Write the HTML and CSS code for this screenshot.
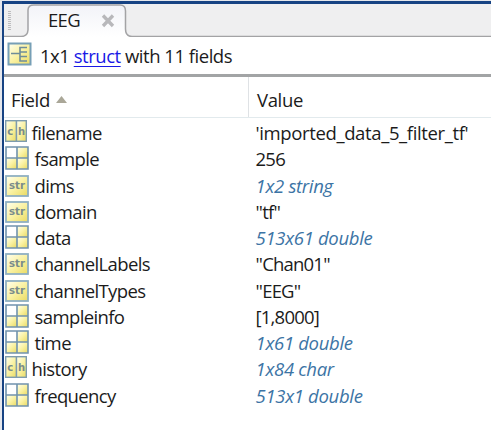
FILE: index.html
```html
<!DOCTYPE html>
<html lang="en">
<head>
<meta charset="utf-8">
<title>EEG</title>
<link rel="stylesheet" href="styles.css">
</head>
<body>
<svg width="0" height="0" class="defs">
  <defs>
    <linearGradient id="cell" x1="0" y1="0" x2="1" y2="1"><stop offset="0" stop-color="#fffff0"/><stop offset=".5" stop-color="#faf2a4"/><stop offset="1" stop-color="#e9da62"/></linearGradient>
    <symbol id="num" viewBox="0 0 24 24">
      <rect x="1" y="1" width="11" height="11" fill="#fff"/>
      <rect x="12" y="1" width="11" height="11" fill="url(#cell)"/>
      <rect x="1" y="12" width="11" height="11" fill="url(#cell)"/>
      <rect x="12" y="12" width="11" height="11" fill="url(#cell)"/>
      <path d="M1 1H23V23H1ZM12 1V23M1 12H23" fill="none" stroke="#7193ad" stroke-width="1.6"/>
    </symbol>
    <symbol id="ch" viewBox="0 0 22 22">
      <rect x=".7" y=".7" width="10.800" height="20.600" fill="url(#cell)" stroke="#7e9cae" stroke-width="1.400"/>
      <rect x="11.500" y=".7" width="9.800" height="20.600" fill="url(#cell)" stroke="#7e9cae" stroke-width="1.400"/>
      <text x="2.300" y="14.500" class="glyph">c</text><text x="13" y="14.500" class="glyph">h</text>
    </symbol>
    <symbol id="str" viewBox="0 0 24 22">
      <rect x="1" y="1" width="22" height="20" fill="url(#cell)" stroke="#8fb0c2" stroke-width="1.800"/>
      <text x="4" y="14.300" class="glyph" textLength="16" lengthAdjust="spacingAndGlyphs">str</text>
    </symbol>
  </defs>
</svg>
<div class="window">
  <div class="tabs">
    <svg class="tabshape" width="487" height="33" viewBox="0 0 487 33">
      <defs><linearGradient id="tab" x2="0" y2="1"><stop stop-color="#f2f3f8"/><stop offset="1" stop-color="#fff"/></linearGradient></defs>
      <path d="M0 32.500H17Q23.500 32.500 24 26V6Q24 1 30 1H116Q121.500 1 121.500 7V25Q121.500 32.500 128 32.500H487V33H0Z" fill="url(#tab)"/>
      <path d="M0 32.500H17Q23.500 32.500 24 26V6Q24 1 30 1H116Q121.500 1 121.500 7V25Q121.500 32.500 128 32.500H487" fill="none" stroke="#a3a3a5" stroke-width="1.500"/>
      <path d="M5.500 7V27" stroke="#bcbcbe" stroke-width="3" stroke-dasharray="1 1"/>
      <path d="M99 11.500L109 22M109 11.500L99 22" stroke="#b8b8bb" stroke-width="3.300"/>
    </svg>
    <span class="title">EEG</span>
  </div>
  <div class="summary">
    <svg width="25" height="24" viewBox="0 0 25 24"><rect x="1.500" y="1.500" width="22" height="21" fill="url(#cell)" stroke="#779fb6" stroke-width="2"/><path d="M4 11.500H13M20 5.500H13V19H20M13 10H20M13 14.500H20" fill="none" stroke="#6f8d99" stroke-width="1.600"/></svg>
    <span class="desc">1x1 <a>struct</a> with 11 fields</span>
  </div>
  <div class="head"><div class="hfield">Field<svg width="11" height="7" viewBox="0 0 11 7"><path d="M0 7L5.500 0L11 7Z" fill="#aaa798"/></svg></div><div class="hvalue">Value</div></div>
  <div class="rows">
    <div class="row ch"><svg><use href="#ch"/></svg><span class="name">filename</span><span class="val path">'imported_data_5_filter_tf'</span></div>
    <div class="row num"><svg><use href="#num"/></svg><span class="name">fsample</span><span class="val">256</span></div>
    <div class="row str"><svg><use href="#str"/></svg><span class="name">dims</span><span class="val type">1x2 string</span></div>
    <div class="row str"><svg><use href="#str"/></svg><span class="name">domain</span><span class="val">"tf"</span></div>
    <div class="row num"><svg><use href="#num"/></svg><span class="name">data</span><span class="val type">513x61 double</span></div>
    <div class="row str"><svg><use href="#str"/></svg><span class="name">channelLabels</span><span class="val">"Chan01"</span></div>
    <div class="row str"><svg><use href="#str"/></svg><span class="name">channelTypes</span><span class="val">"EEG"</span></div>
    <div class="row num"><svg><use href="#num"/></svg><span class="name">sampleinfo</span><span class="val">[1,8000]</span></div>
    <div class="row num"><svg><use href="#num"/></svg><span class="name">time</span><span class="val type">1x61 double</span></div>
    <div class="row ch"><svg><use href="#ch"/></svg><span class="name">history</span><span class="val type">1x84 char</span></div>
    <div class="row num"><svg><use href="#num"/></svg><span class="name">frequency</span><span class="val type">513x1 double</span></div>
  </div>
</div>
</body>
</html>
```

FILE: styles.css
```css
* { box-sizing: border-box; }
body { margin: 0; width: 491px; height: 430px; overflow: hidden; background: #e5e7ec; font: 18.5px/26.2px "Open Sans", "Noto Sans", sans-serif; color: #1b1b1b; letter-spacing: -.35px; white-space: nowrap; }
.defs { position: absolute; }
svg { display: block; flex: none; }
.window { margin: 1px 0 0 2px; height: 429px; border: solid #174383; border-width: 3px 0 0 2px; background: #fff; }
.tabs { height: 33px; background: #efeff0; position: relative; }
.tabshape { position: absolute; left: 0; top: 0; }
.title { position: relative; display: block; padding: 3px 0 0 44px; letter-spacing: -.7px; }
.summary { height: 37px; display: flex; align-items: flex-start; padding: 5px 0 0 3px; }
.desc { margin: 1px 0 0 8px; letter-spacing: -.48px; }
.summary a { color: #1919e6; text-decoration: underline; text-decoration-thickness: 1px; text-underline-offset: 3px; }
.head { height: 44px; border-top: 3px solid #a2a4a5; border-bottom: 1px solid #e2eaed; display: grid; grid-template-columns: 245px 1fr; }
.hfield { display: flex; border-right: 1px solid #dfe2e5; padding: 10px 0 0 7px; }
.hfield svg { margin: 9px 0 0 6px; }
.hvalue { padding: 10px 0 0 8px; }
.rows { padding-top: 2px; }
.row { height: 26.25px; display: grid; grid-template-columns: 30.6px 221px 1fr; align-items: start; }
.row svg { width: 24px; height: 24px; margin-left: .6px; }
.row.ch { grid-template-columns: 27.6px 224px 1fr; }
.row.ch svg { width: 22px; height: 22px; margin-left: .8px; }
.row.str svg { height: 22px; margin: 2px 0 0 1px; }
.name { letter-spacing: -.62px; }
.val { letter-spacing: -.8px; }
.path { letter-spacing: -.37px; }
.type { font-style: italic; color: #3c74a5; letter-spacing: -.32px; }
.glyph { font: bold 10px "DejaVu Sans", sans-serif; fill: #7a8c8b; letter-spacing: 0; }
```
